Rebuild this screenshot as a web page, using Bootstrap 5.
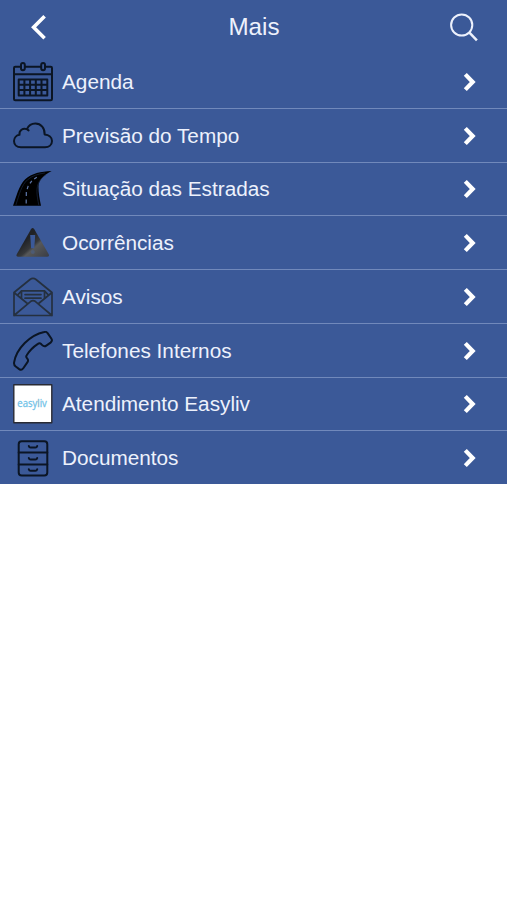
<!DOCTYPE html>
<html lang="pt">
<head>
<meta charset="utf-8">
<meta name="viewport" content="width=device-width, initial-scale=1">
<title>Mais</title>
<link href="https://cdn.jsdelivr.net/npm/bootstrap@5.3.0/dist/css/bootstrap.min.css" rel="stylesheet">
<style>
body{font-family:"Liberation Sans",Arial,sans-serif;background:#fff}
.app-blue{background:#3b5998;color:#edf1fc}
.top-bar{height:55px;padding:0 28px 1px 29px}
.top-bar h1{font-size:24.2px;line-height:54px;font-weight:400}
.side{width:30px}
.menu-row{height:53.75px;padding:1px 27px 0 13px;border:0;border-bottom:1.5px solid #7189bb;border-radius:0;font-size:20.75px;line-height:30px;background:#3b5998;color:#edf1fc}
.menu-row:hover{background:#3b5998;color:#edf1fc}
.menu-row:last-child{height:53px;border-bottom:0;padding-top:0}
.menu-row svg{flex:none;display:block}
.ico{fill:none;stroke:#0b1524;stroke-width:2;stroke-linecap:round;stroke-linejoin:round;margin-right:9px}
.chev{fill:none;stroke:#fff;stroke-width:4.2}
</style>
</head>
<body>
<header class="top-bar app-blue d-flex align-items-center justify-content-between">
  <a href="#" class="side" aria-label="Voltar"><svg class="d-block" width="20" height="28" viewBox="0 0 20 28" fill="none" stroke="#fff" stroke-width="3.6"><path d="M15.6 3.2 4.6 14.3l11 10.9"/></svg></a>
  <h1 class="m-0">Mais</h1>
  <a href="#" class="side" aria-label="Buscar"><svg class="d-block" width="30" height="30" viewBox="0 0 30 30" fill="none" stroke="#edf1fc" stroke-width="2"><circle cx="12.7" cy="13" r="10.6"/><path d="m20.4 20.7 7.5 7.7" stroke-width="2.5"/></svg></a>
</header>
<main class="list-group rounded-0">
  <a href="#" class="list-group-item menu-row d-flex align-items-center">
    <svg class="ico" width="40" height="40" viewBox="0 0 40 40"><path d="M7.5 4.7H2.3q-1.3 0-1.3 1.3V37q0 1.2 1.3 1.2h35.4q1.3 0 1.3-1.2V6q0-1.3-1.3-1.3h-5.2M12 4.7h16M1 12.3h38"/><rect x="8" y="1" width="3.8" height="7.2" rx="1.9"/><rect x="28.2" y="1" width="3.8" height="7.2" rx="1.9"/><path d="M5.7 17.6h28.6v15.8H5.7zM5.7 22.8h28.6M5.7 28.1h28.6M11.4 17.6v15.8M17.1 17.6v15.8M22.8 17.6v15.8M28.5 17.6v15.8"/></svg>
    <span>Agenda</span>
    <svg class="chev ms-auto" width="20" height="20" viewBox="0 0 20 20"><path d="m5.3 2.4 7.4 7.6-7.4 7.6"/></svg>
  </a>
  <a href="#" class="list-group-item menu-row d-flex align-items-center">
    <svg class="ico" width="40" height="40" viewBox="0 0 40 40"><path d="M8 31.3C3.8 31.3 1 28.6 1 25c0-3.3 2.5-5.7 5.5-6.2-.6-4.1 3.4-7.4 7.4-5.6C15.5 9.8 18.6 7.6 22.3 7.6c5.8 0 9.6 4.4 9.3 10.8 4.3.3 7.4 2.8 7.4 6.6 0 3.7-3 6.3-7 6.3zM13.9 13.2l1.7 1.2"/></svg>
    <span>Previsão do Tempo</span>
    <svg class="chev ms-auto" width="20" height="20" viewBox="0 0 20 20"><path d="m5.3 2.4 7.4 7.6-7.4 7.6"/></svg>
  </a>
  <a href="#" class="list-group-item menu-row d-flex align-items-center">
    <svg class="ico" width="40" height="40" viewBox="0 0 40 40" stroke="none"><path fill="#000" stroke="none" d="M0 36.8C3.4 27.5 5.8 16.5 12.2 10.3 18.7 4.1 27.8 2.8 38.6 2c-8.8 4.8-12.9 9-13.1 15.6-.1 6.4 1.1 12.7 2.5 19.2z"/><path d="M3 35.6C6.6 24.8 8.2 16.5 14.5 10.8 19 6.8 25 5 31.5 4M25.7 35.6c-1.9-9.7-2.9-16.8.4-22.8 1.5-2.7 3.8-5 6.6-7" stroke="#1a2640" stroke-width=".7"/><path d="M13.2 34.5v-4M13.3 27v-4M14.2 20.2l1-3.3M17 14.3l1.8-2.5M21.2 9.9l2.6-1.7" stroke="#5f78ab" stroke-width="1.2" stroke-linecap="butt"/></svg>
    <span>Situação das Estradas</span>
    <svg class="chev ms-auto" width="20" height="20" viewBox="0 0 20 20"><path d="m5.3 2.4 7.4 7.6-7.4 7.6"/></svg>
  </a>
  <a href="#" class="list-group-item menu-row d-flex align-items-center">
    <svg class="ico" width="40" height="40" viewBox="0 0 40 40"><defs><linearGradient id="warn" x1="0" y1="0" x2="1" y2="1"><stop offset=".35" stop-color="#202226"/><stop offset=".55" stop-color="#36383b"/><stop offset=".62" stop-color="#575859"/><stop offset="1" stop-color="#393c43"/></linearGradient></defs><path d="M18 6.2q1.6-2.2 3.3 0L35.6 31q1.2 2.8-1.6 2.8H5.4q-2.8 0-1.5-2.8z" fill="url(#warn)" stroke="none"/><path d="M17.2 12h5l-.9 13.3h-3.2z" fill="#3b5998" stroke="none"/><circle cx="19.8" cy="29.1" r="2" fill="#4d5b74" stroke="none"/></svg>
    <span>Ocorrências</span>
    <svg class="chev ms-auto" width="20" height="20" viewBox="0 0 20 20"><path d="m5.3 2.4 7.4 7.6-7.4 7.6"/></svg>
  </a>
  <a href="#" class="list-group-item menu-row d-flex align-items-center">
    <svg class="ico" width="40" height="40" viewBox="0 0 40 40" style="stroke:#25303f;stroke-width:1.7"><path d="M1 15.5v23h38v-23L23 2.5q-3-2.4-6 0zM1 15.5l13.4 11M39 15.5l-13.4 11M1 38.5l16.8-14.2q2.2-1.5 4.4 0L39 38.5M8.5 21.2v-7.4h23v7.4M12 17.6h16M12 21.2h16M8.5 13.8 5 17.6M31.5 13.8l3.5 3.8"/></svg>
    <span>Avisos</span>
    <svg class="chev ms-auto" width="20" height="20" viewBox="0 0 20 20"><path d="m5.3 2.4 7.4 7.6-7.4 7.6"/></svg>
  </a>
  <a href="#" class="list-group-item menu-row d-flex align-items-center">
    <svg class="ico" width="40" height="40" viewBox="0 0 40 40"><path d="M31.2 1c1.5-.5 2.7.1 3.6 1.4l3.5 5.1c1 1.5.7 3-.7 4.1l-4.3 3c-1.4 1-2.9.7-4.1-.5l-1-1c-1.1-1-2.1-1.1-3.3-.2-4.5 3-8.4 6.8-11.2 11.3-.8 1.2-.6 2.2.4 3.2 1.1 1.2 1.3 2.4.4 3.7l-4.2 6.1c-1.1 1.6-2.5 2-4.1.9l-3.5-2.6C1.2 34.5.8 33 1.1 31.3 3.6 17.4 17 4 31.2 1z"/></svg>
    <span>Telefones Internos</span>
    <svg class="chev ms-auto" width="20" height="20" viewBox="0 0 20 20"><path d="m5.3 2.4 7.4 7.6-7.4 7.6"/></svg>
  </a>
  <a href="#" class="list-group-item menu-row d-flex align-items-center">
    <svg class="ico" width="40" height="40" viewBox="0 0 40 40"><rect x=".8" y=".8" width="38" height="38" fill="#fff" stroke="#292b34" stroke-width="1.4"/><text x="4.3" y="22.7" font-family="Open Sans, sans-serif" font-size="10.2" textLength="29.5" lengthAdjust="spacingAndGlyphs" fill="#72c3e8" stroke="#72c3e8" stroke-width=".3">easy<tspan fill="#8fa4b2">l</tspan>iv</text></svg>
    <span>Atendimento Easyliv</span>
    <svg class="chev ms-auto" width="20" height="20" viewBox="0 0 20 20"><path d="m5.3 2.4 7.4 7.6-7.4 7.6"/></svg>
  </a>
  <a href="#" class="list-group-item menu-row d-flex align-items-center">
    <svg class="ico" width="40" height="40" viewBox="0 0 40 40"><rect x="5.7" y="3.3" width="28.6" height="34.2" rx="3"/><path d="M5.7 14.5h28.6M5.7 26.5h28.6M15.8 8q.4 1.6 1.8 1.6h4.8q1.4 0 1.8-1.6M15.8 19.9q.4 1.6 1.8 1.6h4.8q1.4 0 1.8-1.6M15.8 31.2q.4 1.6 1.8 1.6h4.8q1.4 0 1.8-1.6"/></svg>
    <span>Documentos</span>
    <svg class="chev ms-auto" width="20" height="20" viewBox="0 0 20 20"><path d="m5.3 2.4 7.4 7.6-7.4 7.6"/></svg>
  </a>
</main>
<script src="https://cdn.jsdelivr.net/npm/bootstrap@5.3.0/dist/js/bootstrap.bundle.min.js"></script>
</body>
</html>
